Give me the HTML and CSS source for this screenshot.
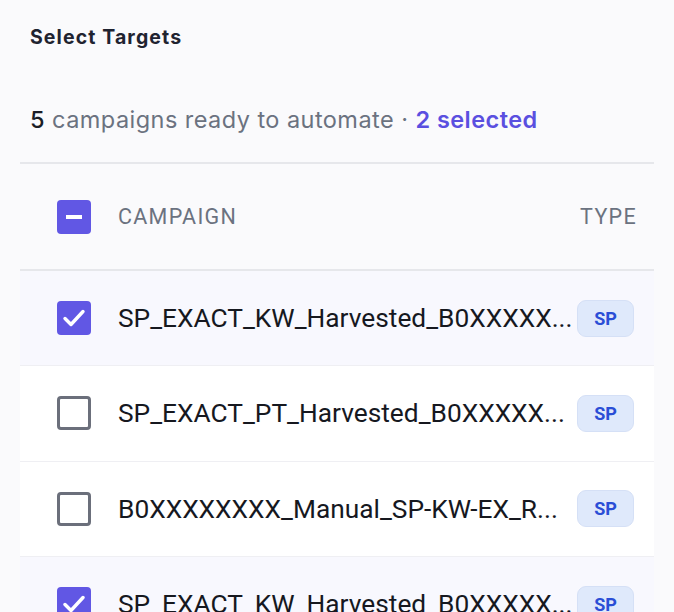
FILE: index.html
```html
<!DOCTYPE html>
<html>
<head>
<meta charset="utf-8">
<link rel="stylesheet" href="styles.css">
</head>
<body>
<div class="page">
  <h2 class="title">Select Targets</h2>
  <p class="summary"><span class="count">5</span> campaigns ready to automate · <span class="sel">2 selected</span></p>
  <div class="table">
    <div class="head">
      <span class="cb cb-on"><span class="dash"></span></span>
      <span class="hcol">CAMPAIGN</span>
      <span class="htype">TYPE</span>
    </div>
    <div class="row row-sel">
      <span class="cb cb-on"><svg viewBox="0 0 34 34" class="tick"><path d="M8 17.5l6 6 12-13" /></svg></span>
      <span class="name">SP_EXACT_KW_Harvested_B0XXXXX...</span>
      <span class="badge">SP</span>
    </div>
    <div class="row">
      <span class="cb cb-off"></span>
      <span class="name">SP_EXACT_PT_Harvested_B0XXXXX...</span>
      <span class="badge">SP</span>
    </div>
    <div class="row">
      <span class="cb cb-off"></span>
      <span class="name">B0XXXXXXXX_Manual_SP-KW-EX_R...</span>
      <span class="badge">SP</span>
    </div>
    <div class="row row-sel">
      <span class="cb cb-on"><svg viewBox="0 0 34 34" class="tick"><path d="M8 17.5l6 6 12-13" /></svg></span>
      <span class="name">SP_EXACT_KW_Harvested_B0XXXXX...</span>
      <span class="badge">SP</span>
    </div>
  </div>
</div>
</body>
</html>
```
FILE: styles.css
```css
html, body {
  margin: 0;
  padding: 0;
  background: #fafafc;
}
.page {
  width: 674px;
  height: 612px;
  overflow: hidden;
  padding: 0 20px;
  box-sizing: border-box;
  font-family: Inter, "Liberation Sans", sans-serif;
}
.title {
  margin: 0;
  padding: 26px 0 0 10px;
  font-size: 19.5px;
  line-height: 22px;
  font-weight: 700;
  letter-spacing: 1.1px;
  color: #1f2330;
}
.summary {
  margin: 0;
  padding: 58px 0 0 10px;
  height: 28px;
  font-size: 23.5px;
  line-height: 28px;
  letter-spacing: 0.45px;
  color: #6b7280;
}
.count {
  color: #1a1d26;
  font-weight: 500;
}
.sel {
  color: #5a4fe0;
  font-weight: 600;
}
.table {
  margin-top: 28px;
  border-top: 2px solid #e6e7eb;
}
.head {
  display: flex;
  align-items: center;
  height: 105px;
  padding: 0 17px 0 37px;
  border-bottom: 2px solid #e6e7eb;
  font-family: Roboto, "Liberation Sans", sans-serif;
  font-size: 21.5px;
  letter-spacing: 1.3px;
  color: #6b7280;
}
.hcol {
  flex: 1;
  margin-left: 27px;
}
.cb {
  flex: none;
  width: 34px;
  height: 34px;
  box-sizing: border-box;
  border-radius: 4px;
  display: flex;
  align-items: center;
  justify-content: center;
}
.cb-on {
  background: #6157e4;
}
.cb-off {
  border: 3px solid #6b6f7b;
  background: #ffffff;
}
.dash {
  width: 16px;
  height: 4px;
  background: #ffffff;
}
.tick {
  width: 34px;
  height: 34px;
}
.tick path {
  fill: none;
  stroke: #ffffff;
  stroke-width: 3.4;
  stroke-linecap: round;
  stroke-linejoin: round;
}
.row {
  display: flex;
  align-items: center;
  height: 94.3px;
  padding: 0 20px 0 37px;
  border-bottom: 1px solid #efeff3;
  background: #ffffff;
  font-family: Roboto, "Liberation Sans", sans-serif;
}
.row-sel {
  background: #f8f8fe;
}
.name {
  flex: 1;
  min-width: 0;
  margin-left: 27px;
  font-size: 26.3px;
  color: #16181f;
  white-space: nowrap;
  overflow: hidden;
}
.badge {
  flex: none;
  width: 57px;
  height: 37px;
  box-sizing: border-box;
  margin-left: 1px;
  border: 1px solid #d5e0f6;
  border-radius: 9px;
  background: #dfe9fb;
  color: #2a4ed6;
  font-size: 18px;
  font-weight: 700;
  display: flex;
  align-items: center;
  justify-content: center;
}
```
